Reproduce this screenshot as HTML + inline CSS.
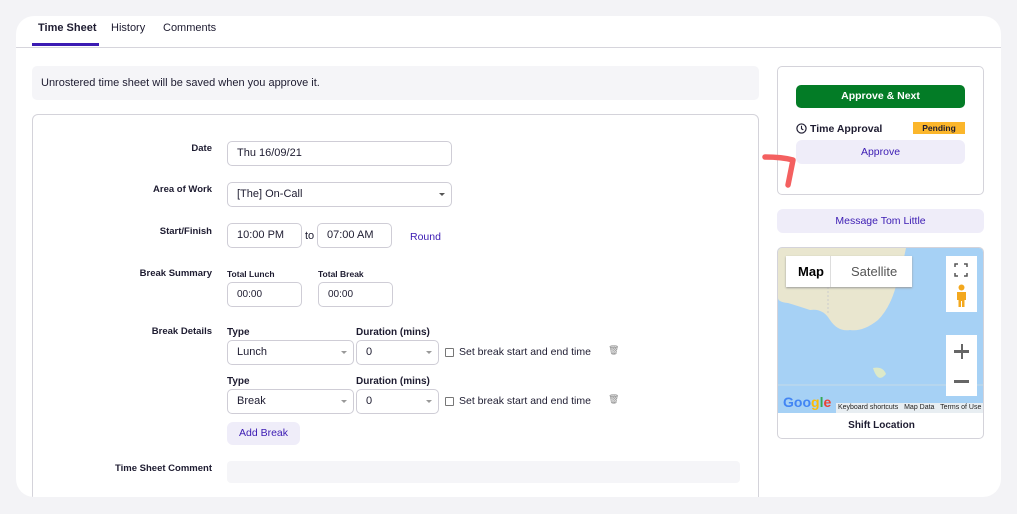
<!DOCTYPE html>
<html><head><style>
*{box-sizing:border-box;margin:0;padding:0}
body{width:1017px;height:514px;background:#f3f3f6;font-family:"Liberation Sans",Arial,sans-serif;color:#1d1b30;position:relative;overflow:hidden;font-size:11px}
.a{position:absolute}
.panel{left:16px;top:16px;width:985px;height:481px;background:#fff;border-radius:18px;overflow:hidden}
.inp{position:absolute;height:25px;border:1px solid #cfcdd6;border-radius:5px;background:#fff;font-size:11px;padding:0 9px;line-height:23px;color:#1d1b30}
.lbl{position:absolute;font-size:9.5px;font-weight:bold;text-align:right;width:180px}
.sl{position:absolute;font-size:10px;font-weight:bold}
.caret{position:absolute;right:6px;top:10px;width:0;height:0;border-left:3px solid transparent;border-right:3px solid transparent;border-top:3px solid #999}
.cb{position:absolute;width:9px;height:9px;border:1px solid #777;border-radius:1px}
.btnl{position:absolute;background:#efedf9;color:#3b1bb3;border-radius:6px;text-align:center;font-size:10.5px}
</style></head><body>
<div class="a panel">
 <div class="a" style="left:22px;top:6px;font-size:11px;font-weight:bold">Time Sheet</div>
 <div class="a" style="left:95px;top:6px;font-size:11px">History</div>
 <div class="a" style="left:147px;top:6px;font-size:11px">Comments</div>
 <div class="a" style="left:16px;top:27px;width:67px;height:3px;background:#3b1bb3"></div>
 <div class="a" style="left:0;top:31px;width:985px;height:1px;background:#d6d5dc"></div>
 <div class="a" style="left:16px;top:50px;width:727px;height:34px;background:#f5f5f8;border-radius:5px;font-size:11px;line-height:34px;padding-left:9px">Unrostered time sheet will be saved when you approve it.</div>
 <div class="a" style="left:16px;top:98px;width:727px;height:400px;border:1px solid #d4d3da;border-radius:6px"></div>
</div>
<div class="lbl" style="left:32px;top:143px">Date</div>
<div class="inp" style="left:227px;top:141px;width:225px">Thu 16/09/21</div>
<div class="lbl" style="left:32px;top:184px">Area of Work</div>
<div class="inp" style="left:227px;top:182px;width:225px">[The] On-Call<span class="caret" style="border-top-color:#555"></span></div>
<div class="lbl" style="left:32px;top:226px">Start/Finish</div>
<div class="inp" style="left:227px;top:223px;width:75px">10:00 PM</div>
<div class="a" style="left:305px;top:230px;font-size:11px">to</div>
<div class="inp" style="left:317px;top:223px;width:75px">07:00 AM</div>
<div class="a" style="left:410px;top:231px;font-size:10.5px;color:#3b1bb3">Round</div>
<div class="lbl" style="left:32px;top:268px">Break Summary</div>
<div class="sl" style="left:227px;top:269px;font-size:8.5px">Total Lunch</div>
<div class="sl" style="left:318px;top:269px;font-size:8.5px">Total Break</div>
<div class="inp" style="left:227px;top:282px;width:75px;font-size:10px">00:00</div>
<div class="inp" style="left:318px;top:282px;width:75px;font-size:10px">00:00</div>
<div class="lbl" style="left:32px;top:326px">Break Details</div>
<div class="sl" style="left:227px;top:327px">Type</div>
<div class="sl" style="left:356px;top:327px">Duration (mins)</div>
<div class="inp" style="left:227px;top:340px;width:127px">Lunch<span class="caret"></span></div>
<div class="inp" style="left:356px;top:340px;width:83px">0<span class="caret"></span></div>
<div class="cb" style="left:445px;top:348px"></div>
<div class="a" style="left:459px;top:346px;font-size:10.5px">Set break start and end time</div>
<div class="a" style="left:608px;top:345px;font-size:9px;color:#888">🗑</div>
<div class="sl" style="left:227px;top:376px">Type</div>
<div class="sl" style="left:356px;top:376px">Duration (mins)</div>
<div class="inp" style="left:227px;top:389px;width:127px">Break<span class="caret"></span></div>
<div class="inp" style="left:356px;top:389px;width:83px">0<span class="caret"></span></div>
<div class="cb" style="left:445px;top:397px"></div>
<div class="a" style="left:459px;top:395px;font-size:10.5px">Set break start and end time</div>
<div class="a" style="left:608px;top:394px;font-size:9px;color:#888">🗑</div>
<div class="btnl" style="left:227px;top:422px;width:73px;height:23px;line-height:23px">Add Break</div>
<div class="lbl" style="left:32px;top:463px">Time Sheet Comment</div>
<div class="a" style="left:227px;top:461px;width:513px;height:22px;background:#f5f5f8;border-radius:4px"></div>
<div class="a" style="left:0;top:497px;width:1017px;height:17px;background:#f3f3f6"></div>

<div class="a" style="left:777px;top:66px;width:207px;height:129px;border:1px solid #d4d3da;border-radius:5px;background:#fff"></div>
<div class="a" style="left:796px;top:85px;width:169px;height:23px;background:#037c26;border-radius:5px;color:#fff;font-weight:bold;font-size:10.5px;text-align:center;line-height:23px">Approve &amp; Next</div>
<svg class="a" style="left:796px;top:123px" width="11" height="11" viewBox="0 0 12 12"><circle cx="6" cy="6" r="5" fill="none" stroke="#1d1b30" stroke-width="1.3"/><path d="M6 3v3.3l2 1.2" fill="none" stroke="#1d1b30" stroke-width="1.2"/></svg>
<div class="a" style="left:810px;top:123px;font-size:10.5px;font-weight:bold">Time Approval</div>
<div class="a" style="left:913px;top:122px;width:52px;height:12px;background:#fbb62b;font-size:8.5px;font-weight:bold;text-align:center;line-height:12px">Pending</div>
<div class="btnl" style="left:796px;top:140px;width:169px;height:24px;line-height:24px">Approve</div>
<svg class="a" style="left:760px;top:152px" width="40" height="40"><path d="M5 5 Q22 5 33 8 L28 33" fill="none" stroke="#f46060" stroke-width="5.5" stroke-linecap="round" stroke-linejoin="round"/></svg>
<div class="btnl" style="left:777px;top:209px;width:207px;height:24px;line-height:24px">Message Tom Little</div>

<div class="a" style="left:777px;top:247px;width:207px;height:192px;border:1px solid #d4d3da;border-radius:5px;overflow:hidden;background:#fff">
 <div class="a" style="left:0;top:0;width:207px;height:165px;background:#a6d1f5"></div>
 <svg class="a" style="left:0;top:0" width="207" height="165"><path d="M0 0 H128 Q124 20 118 38 Q112 60 100 72 Q85 84 72 82 Q60 84 52 72 Q45 60 32 62 Q20 58 10 55 Q0 54 0 50Z" fill="#e9e6cf"/><path d="M95 120 Q105 118 108 126 Q100 136 95 120Z" fill="#dde9c8"/><path d="M0 137 H207" stroke="#c6dbe8"/><path d="M15 35h80M50 35v30" stroke="#ccc" stroke-dasharray="2 2" fill="none"/></svg>
 <div class="a" style="left:8px;top:8px;width:126px;height:31px;background:#fff;box-shadow:0 1px 2px #999"></div>
 <div class="a" style="left:20px;top:16px;font-size:13px;font-weight:bold;color:#000">Map</div>
 <div class="a" style="left:52px;top:8px;width:1px;height:31px;background:#ddd"></div>
 <div class="a" style="left:73px;top:16px;font-size:13px;color:#555">Satellite</div>
 <div class="a" style="left:168px;top:8px;width:31px;height:56px;background:#fff"></div>
 <svg class="a" style="left:176px;top:15px" width="14" height="14"><path d="M1 4V1h3M10 1h3v3M13 10v3h-3M4 13H1v-3" fill="none" stroke="#555" stroke-width="1.5"/></svg>
 <svg class="a" style="left:177px;top:36px" width="13" height="24"><circle cx="6.5" cy="3.5" r="3" fill="#f3a81e"/><path d="M2 8h9v8h-1.5v7h-2.5v-6h-1v6H3.5v-7H2z" fill="#f3a81e"/></svg>
 <div class="a" style="left:168px;top:87px;width:31px;height:61px;background:#fff"></div>
 <div class="a" style="left:176px;top:102px;width:15px;height:2.5px;background:#666"></div>
 <div class="a" style="left:182.5px;top:96px;width:2.5px;height:15px;background:#666"></div>
 <div class="a" style="left:176px;top:132px;width:15px;height:2.5px;background:#666"></div>
 <div class="a" style="left:5px;top:146px;font-size:14px;font-weight:bold;color:#4285f4">Goo<span style="color:#fbbc05">g</span><span style="color:#34a853">l</span><span style="color:#ea4335">e</span></div>
 <div class="a" style="left:58px;top:155px;width:149px;height:10px;background:#e8eef2;font-size:7px;line-height:10px;color:#222">&nbsp;Keyboard shortcuts &nbsp; Map Data &nbsp; Terms of Use</div>
 <div class="a" style="left:0;top:172px;width:207px;text-align:center;font-size:10px;font-weight:bold">Shift Location</div>
</div>
</body></html>
